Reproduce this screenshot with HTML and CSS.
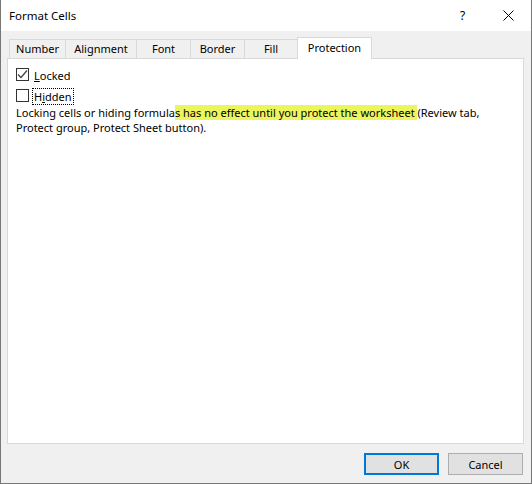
FILE: index.html
```html
<!DOCTYPE html>
<html>
<head>
<meta charset="utf-8">
<link rel="stylesheet" href="styles.css">
</head>
<body>
<div class="window">
  <div class="titlebar">
    <span class="title">Format Cells</span>
    <span class="help">?</span>
    <span class="close"><svg width="11" height="11" viewBox="0 0 11 11"><path d="M0.5 0.5 L10.5 10.5 M10.5 0.5 L0.5 10.5" stroke="#000" stroke-width="1" fill="none"/></svg></span>
  </div>
  <div class="content">
    <div class="tabs">
      <div class="tab t-number">Number</div>
      <div class="tab t-align">Alignment</div>
      <div class="tab t-font">Font</div>
      <div class="tab t-border">Border</div>
      <div class="tab t-fill">Fill</div>
      <div class="tab t-prot active">Protection</div>
    </div>
    <div class="panel">
      <div class="check">
        <span class="box"><svg width="11" height="11" viewBox="0 0 11 11"><path d="M1 5.5 L4 8.5 L10 1.5" stroke="#444" stroke-width="1.3" fill="none"/></svg></span>
        <span class="lbl"><u>L</u>ocked</span>
      </div>
      <div class="check">
        <span class="box"></span>
        <span class="lbl focus">H<u>i</u>dden</span>
      </div>
      <p class="desc">Locking cells or hiding formula<mark>s has no effect until you protect the worksheet </mark>(Review tab, Protect group, Protect Sheet button).</p>
    </div>
    <div class="buttons">
      <button class="btn default">OK</button>
      <button class="btn">Cancel</button>
    </div>
  </div>
</div>
</body>
</html>
```
FILE: styles.css
```css
html, body {
  margin: 0;
  padding: 0;
  background: #ffffff;
}
body {
  font-family: "Noto Sans", "Liberation Sans", sans-serif;
  font-size: 11px;
  color: #000;
}
.window {
  width: 532px;
  height: 484px;
  box-sizing: border-box;
  border: 1px solid #777777;
  border-top: none;
  display: flex;
  flex-direction: column;
  overflow: hidden;
}
.titlebar {
  height: 31px;
  flex: none;
  background: #fff;
  display: flex;
  align-items: center;
  padding-left: 8px;
}
.title {
  flex: 1;
  font-size: 11.5px;
  padding-bottom: 1px;
}
.help {
  font-size: 12px;
  width: 5px;
  margin-right: 38px;
  padding-bottom: 1px;
}
.close {
  width: 11px;
  height: 11px;
  margin-right: 17px;
  display: flex;
}
.content {
  flex: 1;
  background: #f0f0f0;
  display: flex;
  flex-direction: column;
  padding: 7px 7px 0 6px;
}
.tabs {
  display: flex;
  align-items: flex-end;
  height: 21px;
  padding-left: 2px;
  position: relative;
  z-index: 1;
  margin-bottom: -1px;
}
.tab {
  box-sizing: border-box;
  height: 19px;
  border: 1px solid #d9d9d9;
  border-bottom: none;
  background: #f0f0f0;
  text-align: center;
  line-height: 18px;
  margin-right: -1px;
  margin-bottom: 1px;
}
.tab.active {
  background: #fff;
  height: 22px;
  margin-bottom: 0;
  line-height: 19px;
  position: relative;
}
.t-number { width: 57px; }
.t-align { width: 72px; }
.t-font { width: 55px; }
.t-border { width: 55px; }
.t-fill { width: 54px; }
.t-prot { width: 75px; }
.panel {
  flex: 1;
  background: #fff;
  border: 1px solid #d9d9d9;
  padding: 9px 8px 0 8px;
}
.check {
  display: flex;
  align-items: center;
  height: 13px;
  margin-bottom: 8px;
}
.box {
  box-sizing: border-box;
  width: 13px;
  height: 13px;
  border: 1px solid #333;
  background: #fff;
  display: flex;
  align-items: center;
  justify-content: center;
  margin-right: 4px;
}
.lbl {
  line-height: 15px;
  padding: 0 1px;
  margin-top: 2px;
}
.lbl.focus {
  outline: 1px dotted #000;
}
.desc {
  margin: -5px 0 0 0;
  line-height: 15px;
}
mark {
  background: #ecf55c;
  color: #000;
}
.buttons {
  display: flex;
  justify-content: flex-end;
  gap: 9px;
  margin: 9px 0 8px 0;
  padding-right: 1px;
}
.btn {
  box-sizing: border-box;
  width: 75px;
  height: 22px;
  font-family: "Noto Sans", "Liberation Sans", sans-serif;
  font-size: 11px;
  background: #e1e1e1;
  border: 1px solid #adadad;
  padding: 0;
  color: #000;
}
.btn.default {
  border: 2px solid #0078d7;
}
```
